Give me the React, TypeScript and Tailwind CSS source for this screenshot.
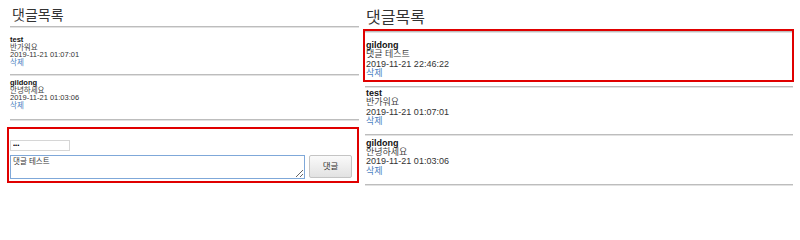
import React from 'react'

// ── Data ──────────────────────────────────────────────────────────────────────

type Comment = { writer: string; content: string; date: string }

const OLD: Comment[] = [
  { writer: 'test', content: '반가워요', date: '2019-11-21 01:07:01' },
  { writer: 'gildong', content: '안녕하세요', date: '2019-11-21 01:03:06' },
]

const NEW: Comment = { writer: 'gildong', content: '댓글 테스트', date: '2019-11-21 22:46:22' }

const FONT = 'font-["Liberation_Sans","Noto_Sans_CJK_KR",sans-serif]'

function Rule({ className = '' }: { className?: string }) {
  return <div className={`h-[2px] border-t border-[#bdbdbd] border-b border-b-[#e2e2e2] ${className}`} />
}

function CommentText({ c, small }: { c: Comment; small?: boolean }) {
  const size = small ? 'text-[7.5px] leading-[7.7px]' : 'text-[9px] leading-[9.4px]'
  return (
    <div className={size}>
      <p className="font-bold text-[#111]">{c.writer}</p>
      <p className="text-[#444]">{c.content}</p>
      <p className="text-[#333]">{c.date}</p>
      <p className="text-[#4a7fc1]">삭제</p>
    </div>
  )
}

// ── Left: before posting ──────────────────────────────────────────────────────

function BeforePanel() {
  return (
    <div className="w-[363px] pl-[7px] pr-[4px]">
      <h2 className="ml-[5px] pt-[6px] text-[14px] leading-[18px] text-[#333]">댓글목록</h2>
      <Rule className="ml-[3px] mt-[2px]" />
      <div className="ml-[3px] pt-[8px] pb-[7px]">
        <CommentText c={OLD[0]} small />
      </div>
      <Rule className="ml-[3px]" />
      <div className="ml-[3px] pt-[3px] pb-[9px]">
        <CommentText c={OLD[1]} small />
      </div>
      <Rule className="ml-[3px]" />

      {/* write form */}
      <div className="mt-[6px] h-[56px] border-2 border-[#e00000] pl-px pt-[11px]">
        <input
          type="password"
          readOnly
          defaultValue="123"
          className="block h-[11px] w-[60px] border border-[#d6d6d6] bg-white px-[2px] text-[6px] leading-[9px] outline-none"
        />
        <div className="mt-[4px] flex items-start gap-[4px]">
          <textarea
            readOnly
            defaultValue="댓글 테스트"
            className="block h-[24px] w-[295px] border border-[#7fa8d9] bg-white px-[2px] py-px text-[7.5px] leading-[9px] text-[#333] outline-none"
          />
          <button className="h-[23px] w-[43px] rounded-[2px] border border-[#c4c4c4] bg-gradient-to-b from-[#fafafa] to-[#e2e2e2] text-[8.5px] text-[#333]">
            댓글
          </button>
        </div>
      </div>
    </div>
  )
}

// ── Right: after posting ──────────────────────────────────────────────────────

function AfterPanel() {
  return (
    <div className="w-[431px]">
      <h2 className="ml-[3px] pt-[8px] text-[16px] leading-[20px] text-[#333]">댓글목록</h2>
      <div className="mt-px h-[53px] border-2 border-[#e00000]">
        <Rule />
        <div className="pl-px pt-[8px]">
          <CommentText c={NEW} />
        </div>
      </div>
      <Rule className="ml-[2px] mr-px mt-[4px]" />
      <div className="ml-[3px] pt-[1px] pb-[7px]">
        <CommentText c={OLD[0]} />
      </div>
      <Rule className="ml-[2px] mr-px" />
      <div className="ml-[3px] pt-[3px] pb-[8px]">
        <CommentText c={OLD[1]} />
      </div>
      <Rule className="ml-[2px] mr-px" />
    </div>
  )
}

export default function App() {
  return (
    <div className={`flex h-[200px] w-[800px] overflow-hidden bg-white ${FONT}`}>
      <BeforePanel />
      <AfterPanel />
    </div>
  )
}
